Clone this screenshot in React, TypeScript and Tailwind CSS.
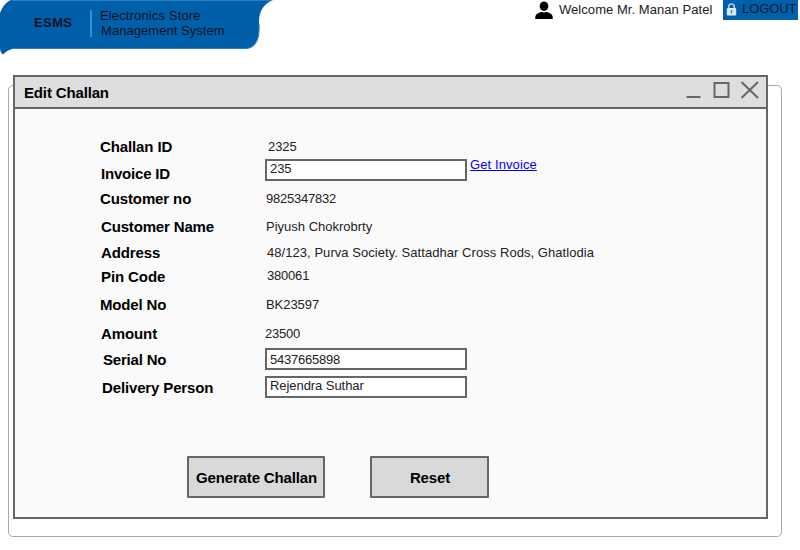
import React from "react";

type Row = {
  label: string;
  value: string;
  rowClass: string;
  labelClass: string;
  valueClass: string;
  input?: boolean;
  link?: string;
};

const rows: Row[] = [
  { label: "Challan ID", value: "2325", rowClass: "h-[27px]", labelClass: "pl-[85px] tracking-[-0.12px]", valueClass: "pt-[7px] pl-[3px] tracking-[-0.1px]" },
  { label: "Invoice ID", value: "235", rowClass: "h-[25px]", labelClass: "pl-[86px] tracking-[-0.2px]", valueClass: "tracking-[-0.1px]", input: true, link: "Get Invoice" },
  { label: "Customer no", value: "9825347832", rowClass: "h-[28px]", labelClass: "pl-[85px] tracking-[-0.12px]", valueClass: "pt-[7px] pl-px tracking-[-0.23px]" },
  { label: "Customer Name", value: "Piyush Chokrobrty", rowClass: "h-[26px]", labelClass: "pl-[86px] tracking-[-0.16px]", valueClass: "pt-[7px] pl-px" },
  { label: "Address", value: "48/123, Purva Society. Sattadhar Cross Rods, Ghatlodia", rowClass: "h-[24px]", labelClass: "pl-[86px] tracking-[-0.1px]", valueClass: "pt-[7px] pl-[2px] tracking-[0.05px]" },
  { label: "Pin Code", value: "380061", rowClass: "h-[28px]", labelClass: "pl-[86px] tracking-[-0.1px]", valueClass: "pt-[6px] pl-[2px] tracking-[-0.2px]" },
  { label: "Model No", value: "BK23597", rowClass: "h-[29px]", labelClass: "pl-[85px] tracking-[-0.15px]", valueClass: "pt-[7px] pl-px tracking-[-0.05px]" },
  { label: "Amount", value: "23500", rowClass: "h-[26px]", labelClass: "pl-[86px] tracking-[-0.1px]", valueClass: "pt-[7px] tracking-[-0.2px]" },
  { label: "Serial No", value: "5437665898", rowClass: "h-[28px]", labelClass: "pl-[88px] tracking-[-0.2px]", valueClass: "pt-[2px] tracking-[-0.23px]", input: true },
  { label: "Delivery Person", value: "Rejendra Suthar", rowClass: "h-[28px]", labelClass: "pl-[87px] tracking-[-0.14px]", valueClass: "tracking-[-0.06px]", input: true },
];

function Banner() {
  return (
    <div className="relative h-[56px] w-[275px]">
      <svg className="absolute inset-0" width="275" height="56" viewBox="0 0 275 56">
        <path d="M11 0H273C263 4 259 12 259 22C260 38 256 48 246 48.5H17C10 48.5 7 51 3 54.5C1 53 0 51 0 48V13C3 6 6 2 11 0Z" fill="#005fa9" />
        <path d="M12 .5H271M13 48.5H246C256 48 260 39 259 24" fill="none" stroke="#2b7dbb" strokeWidth="1" />
      </svg>
      <div className="relative flex">
        <div className="w-[90px] pt-[15px] pl-[34px] text-[13px] leading-[16px] font-bold tracking-[0.4px] text-[#06121f]">ESMS</div>
        <div className="mt-[10px] h-[27px] w-[2px] bg-[#2795d3]" />
        <div className="pt-[8px] pl-[8px] text-[13px] leading-[15px] whitespace-nowrap text-[#06121f]">
          <div className="tracking-[0.14px]">Electronics Store</div>
          <div className="pl-px tracking-[0.05px]">Management System</div>
        </div>
      </div>
    </div>
  );
}

function UserBar() {
  return (
    <div className="flex h-5 text-[13px] leading-[16px] whitespace-nowrap">
      <svg className="mt-px" width="18" height="18" viewBox="0 0 18 18">
        <ellipse cx="9" cy="5.2" rx="4.3" ry="4.8" fill="#000" />
        <path d="M.3 18V15.5Q.5 13 3.5 12L6.7 10.8Q9 12 11.3 10.8L14.5 12Q17.5 13 17.7 15.5V18Z" fill="#000" />
      </svg>
      <div className="w-[170px] pt-[2px] pl-[6px] tracking-[0.05px] text-[#222]">Welcome Mr. Manan Patel</div>
      <div className="flex w-[75px] bg-[#005fa9] text-[#051a30]">
        <svg className="mt-[3px] ml-[3px]" width="11" height="13" viewBox="0 0 11 13">
          <path d="M2.7 6V3.7Q2.7 1 5.5 1Q8.3 1 8.3 3.7V6" fill="none" stroke="#a9cce6" strokeWidth="1.6" />
          <rect x=".8" y="5" width="9.4" height="7.5" rx="1" fill="#d9ebf7" />
          <path d="M5.5 7V10.5" stroke="#4182b7" strokeWidth="1.5" />
        </svg>
        <span className="pt-px pl-[5px] tracking-[-0.1px]">LOGOUT</span>
      </div>
    </div>
  );
}

function FormRow({ row, boxTop }: { row: Row; boxTop: string }) {
  return (
    <div className={`flex whitespace-nowrap ${row.rowClass}`}>
      <div className={`w-[250px] shrink-0 pt-[6px] text-[15px] leading-[18px] font-bold ${row.labelClass}`}>{row.label}</div>
      {row.input ? (
        <div className={`h-[22px] w-[202px] border-2 border-[#666] bg-white pl-[3px] text-[13px] leading-[16px] text-[#222] ${boxTop}`}>
          <div className={row.valueClass}>{row.value}</div>
        </div>
      ) : (
        <div className={`text-[13px] leading-[16px] text-[#222] ${row.valueClass}`}>{row.value}</div>
      )}
      {row.link && (
        <a className="-mt-[2px] pl-[3px] text-[13px] leading-[16px] tracking-[0.1px] text-[#00f] underline">{row.link}</a>
      )}
    </div>
  );
}

export default function App() {
  return (
    <div className="h-[550px] w-[800px] overflow-hidden bg-white font-['Liberation_Sans',Arial,sans-serif] text-black">
      <header className="flex h-[85px] items-start justify-between pr-[2px]">
        <Banner />
        <UserBar />
      </header>
      <main className="ml-[8px] h-[452px] w-[774px] rounded-[5px] border border-[#aaaa99] pl-[4px]">
        <section className="-mt-[11px] h-[444px] w-[755px] border-2 border-[#666] bg-[#fafafa]">
          <div className="flex h-[32px] items-start justify-between border-b-2 border-[#666] bg-[#dedede]">
            <h1 className="pt-[7px] pl-[9px] text-[15px] leading-[18px] font-bold tracking-[-0.15px]">Edit Challan</h1>
            <svg className="mt-[2px] mr-[6px]" width="76" height="22" viewBox="0 0 76 22" fill="none" stroke="#666" strokeWidth="2">
              <path d="M2.5 18H16.5" />
              <rect x="30.5" y="4" width="14" height="14" />
              <path d="M57.5 3L74 19M74 3L57.5 19" />
            </svg>
          </div>
          <div className="h-[347px] pt-[23px]">
            {rows.map((row) => (
              <FormRow key={row.label} row={row} boxTop={row.link ? "mt-0" : "mt-[3px]"} />
            ))}
          </div>
          <div className="flex pl-[172px] text-[15px] leading-[40px] font-bold">
            <div className="h-[42px] w-[138px] rounded-[1px] border-2 border-[#666] bg-[#d9d9d9] pl-px text-center tracking-[-0.14px] whitespace-nowrap">Generate Challan</div>
            <div className="ml-[45px] h-[42px] w-[119px] rounded-[1px] border-2 border-[#666] bg-[#d9d9d9] pl-px text-center tracking-[-0.14px]">Reset</div>
          </div>
        </section>
      </main>
    </div>
  );
}
